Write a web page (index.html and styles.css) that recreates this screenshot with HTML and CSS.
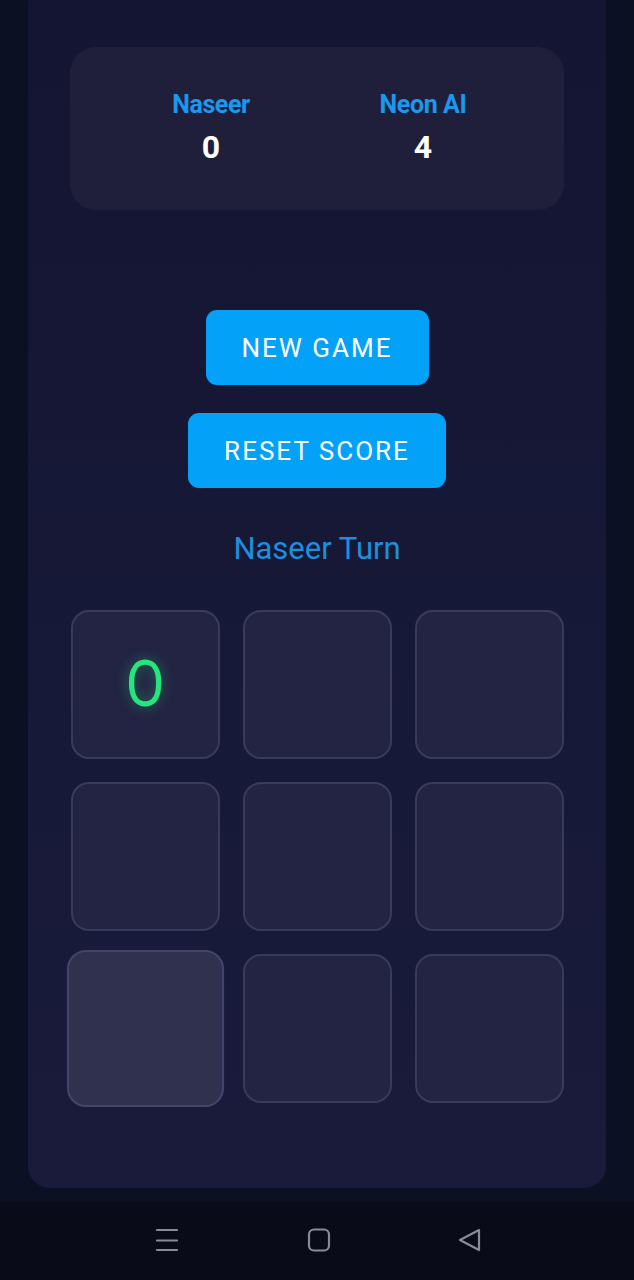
FILE: index.html
```html
<!DOCTYPE html>
<html lang="en">
<head>
<meta charset="utf-8">
<title>Tic Tac Toe</title>
<link rel="stylesheet" href="styles.css">
</head>
<body>
<div class="screen">
  <main class="panel">
    <section class="score-card">
      <div class="player">
        <div class="player-name">Naseer</div>
        <div class="player-score">0</div>
      </div>
      <div class="player">
        <div class="player-name">Neon AI</div>
        <div class="player-score">4</div>
      </div>
    </section>
    <div class="actions">
      <button class="btn">NEW GAME</button>
      <button class="btn">RESET SCORE</button>
    </div>
    <div class="turn">Naseer Turn</div>
    <div class="board">
      <div class="cell"><span class="mark">O</span></div>
      <div class="cell"></div>
      <div class="cell"></div>
      <div class="cell"></div>
      <div class="cell"></div>
      <div class="cell"></div>
      <div class="cell cell-hover"></div>
      <div class="cell"></div>
      <div class="cell"></div>
    </div>
  </main>
  <nav class="navbar">
    <svg class="nav-icon" width="24" height="24" viewBox="0 0 24 24"><path d="M2 2h20M2 12.5h20M2 22h20" stroke="#8a8a9a" stroke-width="2.2" stroke-linecap="round" fill="none"/></svg>
    <svg class="nav-icon" width="24" height="24" viewBox="0 0 24 24"><rect x="2" y="1.5" width="20" height="21" rx="5" stroke="#8a8a9a" stroke-width="2.2" fill="none"/></svg>
    <svg class="nav-icon" width="24" height="24" viewBox="0 0 24 24"><path d="M21 2 L2 12 L21 22 Z" stroke="#8a8a9a" stroke-width="2.2" stroke-linejoin="round" fill="none"/></svg>
  </nav>
</div>
</body>
</html>
```

FILE: styles.css
```css
* { box-sizing: border-box; }
html, body { margin: 0; padding: 0; }
body {
  background: #0b1023;
  font-family: Roboto, "Noto Sans", Arial, sans-serif;
}
.screen {
  width: 634px;
  height: 1280px;
  display: flex;
  flex-direction: column;
}
.panel {
  margin: 0 28px;
  height: 1188px;
  background: linear-gradient(180deg, #131532 0%, #171938 60%, #1a1b3b 100%);
  border-radius: 0 0 22px 22px;
  padding: 47px 42px 0;
  display: flex;
  flex-direction: column;
  align-items: center;
}
.score-card {
  width: 494px;
  height: 163px;
  background: #201f3b;
  border-radius: 26px;
  display: grid;
  grid-template-columns: 1fr 1fr;
  padding: 0 35px;
  align-items: center;
}
.player {
  display: flex;
  flex-direction: column;
  align-items: center;
  gap: 10px;
  padding-bottom: 2px;
}
.player-name {
  color: #1a98ee;
  font-size: 25px;
  font-weight: 700;
  line-height: 28px;
  letter-spacing: -0.4px;
}
.player-score {
  color: #ffffff;
  font-size: 32px;
  font-weight: 700;
  line-height: 36px;
}
.actions {
  margin-top: 100px;
  display: flex;
  flex-direction: column;
  align-items: center;
  gap: 28px;
}
.btn {
  height: 75px;
  padding: 0 36px;
  border: none;
  border-radius: 11px;
  background: #03a2f8;
  color: #ffffff;
  font-family: Roboto, "Noto Sans", Arial, sans-serif;
  font-size: 26px;
  letter-spacing: 2px;
  font-weight: 400;
}
.turn {
  margin-top: 43px;
  color: #1c8fdf;
  font-size: 31px;
  line-height: 36px;
}
.board {
  margin-top: 43px;
  display: grid;
  grid-template-columns: repeat(3, 149px);
  grid-auto-rows: 149px;
  gap: 23px;
}
.cell {
  border: 2px solid #3a3a5e;
  border-radius: 18px;
  background: #232343;
  display: flex;
  align-items: center;
  justify-content: center;
}
.cell-hover {
  transform: scale(1.055);
  background: #30304f;
  border-color: #44446a;
}
.mark {
  color: #24e67c;
  font-size: 64px;
  font-weight: 400;
  line-height: 1;
  transform: scaleX(0.88);
  text-shadow: 0 0 14px rgba(36, 230, 124, 0.45);
}
.navbar {
  margin-top: 14px;
  flex: 1;
  background: #0a0b18;
  display: flex;
  align-items: center;
  justify-content: space-between;
  padding: 0 152px 3px 155px;
}
.nav-icon { display: block; }
```
